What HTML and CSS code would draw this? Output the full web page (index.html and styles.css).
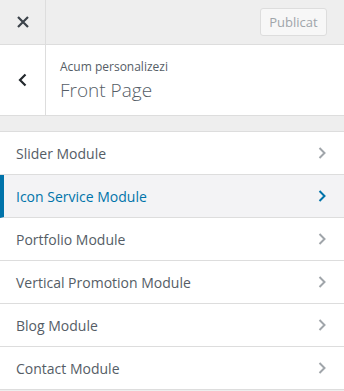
FILE: index.html
```html
<!DOCTYPE html>
<html lang="ro">
<head>
    <meta charset="UTF-8">
    <meta name="viewport" content="width=device-width, initial-scale=1.0">
    <title>Personalizare - Front Page</title>
    <link rel="stylesheet" href="styles.css">
</head>
<body>
    <div class="sidebar">
        <div class="topbar">
            <button class="close-btn" aria-label="Închide">
                <svg width="12" height="12" viewBox="0 0 12 12">
                    <path d="M1 1 L11 11 M11 1 L1 11" stroke="#3c434a" stroke-width="2.2"/>
                </svg>
            </button>
            <div class="topbar-fill"></div>
            <button class="publish-btn" disabled>Publicat</button>
        </div>

        <div class="panel-head">
            <button class="back-btn" aria-label="Înapoi">
                <svg width="9" height="14" viewBox="0 0 9 14">
                    <path d="M7.5 1.5 L2 7 L7.5 12.5" fill="none" stroke="#23282d" stroke-width="2.2"/>
                </svg>
            </button>
            <div class="panel-title">
                <span class="panel-sub">Acum personalizezi</span>
                <span class="panel-name">Front Page</span>
            </div>
        </div>

        <div class="gap"></div>

        <ul class="sections">
            <li class="section">Slider Module<svg class="chev" viewBox="0 0 8 12"><path d="M1.5 1 L6.5 6 L1.5 11"/></svg></li>
            <li class="section active">Icon Service Module<svg class="chev" viewBox="0 0 8 12"><path d="M1.5 1 L6.5 6 L1.5 11"/></svg></li>
            <li class="section">Portfolio Module<svg class="chev" viewBox="0 0 8 12"><path d="M1.5 1 L6.5 6 L1.5 11"/></svg></li>
            <li class="section">Vertical Promotion Module<svg class="chev" viewBox="0 0 8 12"><path d="M1.5 1 L6.5 6 L1.5 11"/></svg></li>
            <li class="section">Blog Module<svg class="chev" viewBox="0 0 8 12"><path d="M1.5 1 L6.5 6 L1.5 11"/></svg></li>
            <li class="section">Contact Module<svg class="chev" viewBox="0 0 8 12"><path d="M1.5 1 L6.5 6 L1.5 11"/></svg></li>
        </ul>
    </div>
</body>
</html>
```

FILE: styles.css
```css
* {
    margin: 0;
    padding: 0;
    box-sizing: border-box;
}

body {
    background: #eeeeee;
    font-family: 'Open Sans', 'Noto Sans', 'Liberation Sans', sans-serif;
    color: #555d66;
}

.sidebar {
    width: 344px;
}

.topbar {
    display: flex;
    align-items: center;
    height: 45px;
    background: #eeeeee;
    border-bottom: 1px solid #dddddd;
}

.close-btn,
.back-btn {
    width: 46px;
    height: 100%;
    border: none;
    border-right: 1px solid #dddddd;
    background: transparent;
    display: flex;
    align-items: center;
    justify-content: center;
    cursor: pointer;
}

.topbar-fill {
    flex: 1;
}

.publish-btn {
    width: 67px;
    height: 28px;
    margin-right: 17px;
    border: 1px solid #dddddd;
    border-radius: 3px;
    background: #f7f7f7;
    color: #a0a5aa;
    font-family: inherit;
    font-size: 13px;
}

.panel-head {
    display: flex;
    height: 71px;
    background: #ffffff;
    border-bottom: 1px solid #dddddd;
}

.panel-title {
    display: flex;
    flex-direction: column;
    justify-content: center;
    padding-left: 14px;
    padding-top: 2px;
}

.panel-sub {
    font-size: 12px;
    color: #555d66;
    line-height: 18px;
}

.panel-name {
    font-size: 19px;
    font-weight: 300;
    color: #555d66;
    line-height: 28px;
}

.gap {
    height: 16px;
    border-bottom: 1px solid #dddddd;
}

.sections {
    list-style: none;
}

.section {
    display: flex;
    align-items: center;
    justify-content: space-between;
    height: 43px;
    padding-left: 16px;
    padding-right: 18px;
    background: #ffffff;
    border-bottom: 1px solid #dddddd;
    font-size: 14px;
    color: #555d66;
}

.chev {
    width: 8px;
    height: 12px;
    fill: none;
    stroke: #a0a5aa;
    stroke-width: 2;
}

.section.active {
    background: #f3f3f5;
    color: #0073aa;
    border-left: 4px solid #0073aa;
    padding-left: 12px;
}

.section.active .chev {
    stroke: #0073aa;
}
```
